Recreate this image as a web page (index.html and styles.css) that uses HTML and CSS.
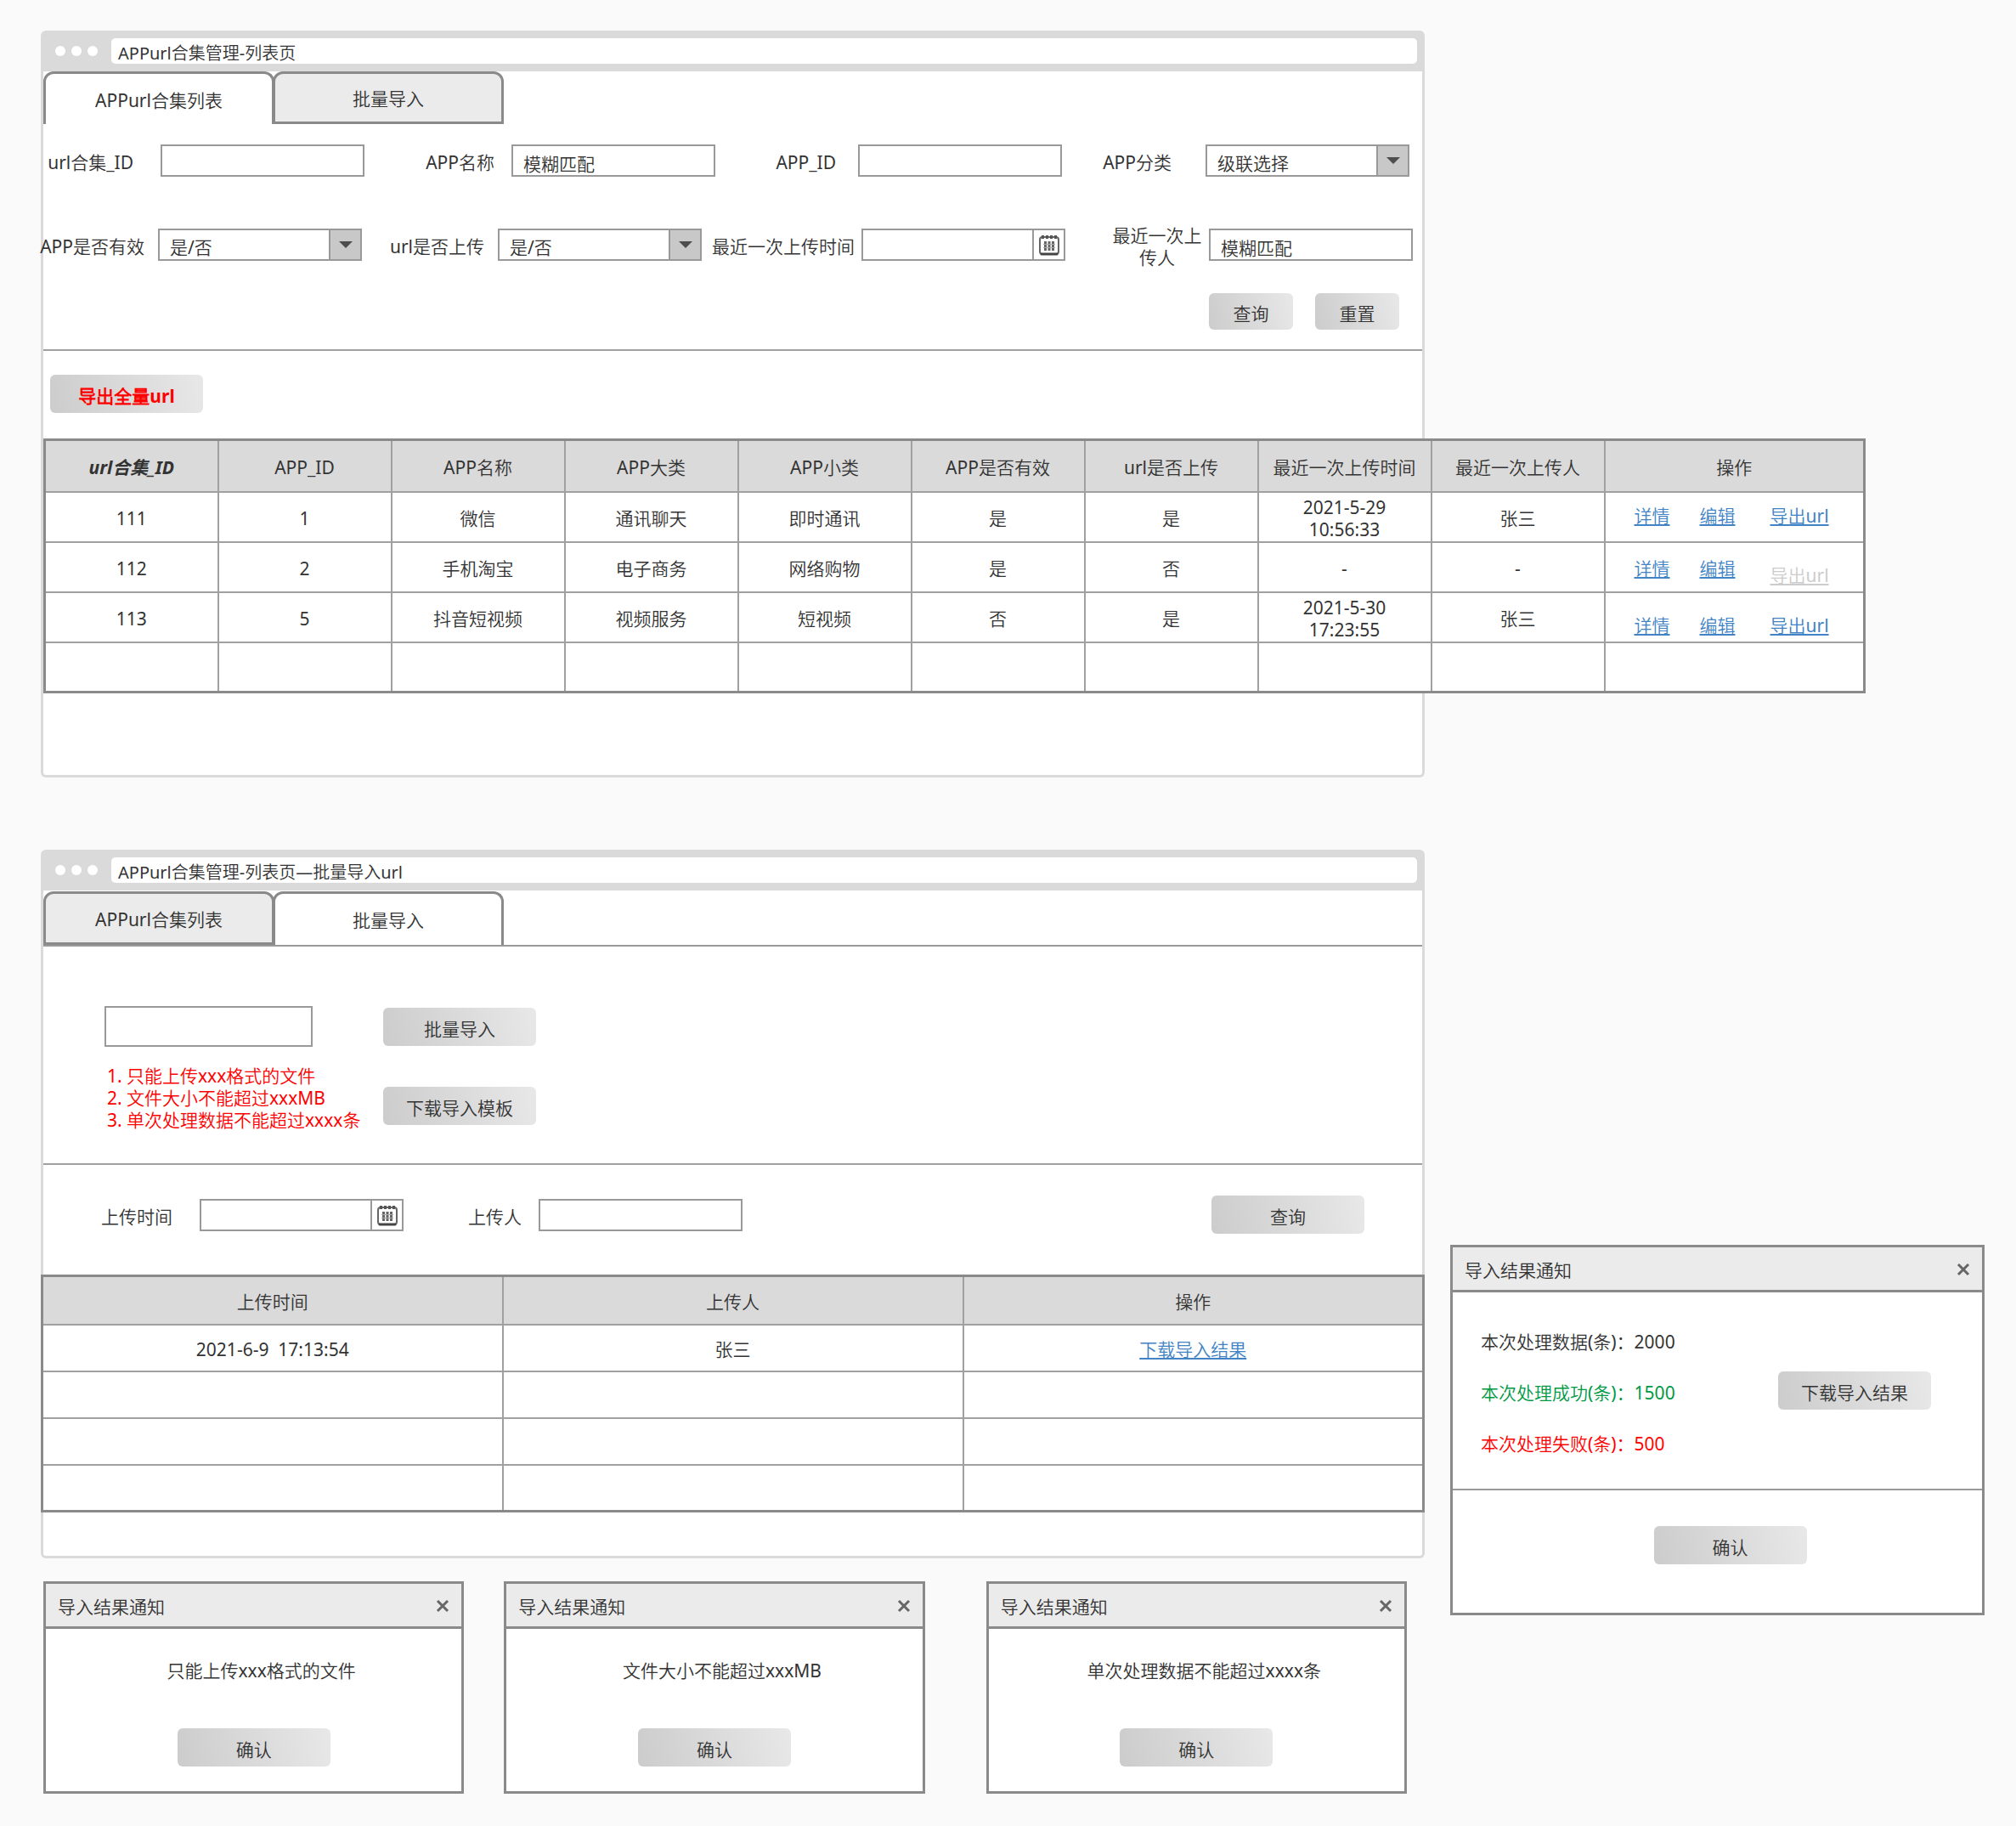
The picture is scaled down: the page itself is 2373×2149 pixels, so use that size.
FILE: index.html
```html
<!DOCTYPE html>
<html lang="zh-CN">
<head>
<meta charset="utf-8">
<meta name="viewport" content="width=device-width, initial-scale=1">
<title>APPurl合集管理</title>
<link rel="stylesheet" href="styles.css">
</head>
<body>
<svg class="sprite" aria-hidden="true">
  <symbol id="icon-calendar" viewBox="0 0 24 26">
    <rect x="1" y="4" width="22" height="20" rx="3" fill="#fff" stroke="#666" stroke-width="2"/>
    <path d="M3 24h18" stroke="#444" stroke-width="3" stroke-linecap="round"/>
    <path d="M3 4h18" stroke="#555" stroke-width="4" stroke-dasharray="3 2"/>
    <path d="M7.500 9v11M12 9v11M16.500 9v11" stroke="#666" stroke-width="3"/>
    <path d="M5 12.500h14M5 16.500h14" stroke="#aaa" stroke-width="1"/>
  </symbol>
  <symbol id="icon-arrow" viewBox="0 0 16 8"><path d="M0 0h16L8 8z" fill="#4d4d4d"/></symbol>
  <symbol id="icon-close" viewBox="0 0 16 16"><path d="M2 2l12 12M14 2L2 14" stroke="#666" stroke-width="3"/></symbol>
</svg>

<main class="board">
  <section class="window">
    <header class="window-bar">
      <span class="dot"></span><span class="dot"></span><span class="dot"></span>
      <h1 class="address">APPurl合集管理-列表页</h1>
    </header>
    <div class="window-body window-body-list">
      <nav class="tabs">
        <button class="tab tab-active" type="button">APPurl合集列表</button>
        <button class="tab" type="button">批量导入</button>
      </nav>
      <form class="filters">
        <div class="filter-row filter-row-first">
          <div class="field space-2xl"><label for="set-id">url合集_ID</label><input class="control" id="set-id" type="text"></div>
          <div class="field space-lg"><label for="app-name">APP名称</label><input class="control" id="app-name" type="text" value="模糊匹配"></div>
          <div class="field space-xl"><label for="app-id">APP_ID</label><input class="control" id="app-id" type="text"></div>
          <div class="field space-3xl"><label for="app-type">APP分类</label><span class="control combo"><select id="app-type"><option>级联选择</option></select><span class="combo-arrow"><svg width="16" height="8"><use href="#icon-arrow"/></svg></span></span></div>
        </div>
        <div class="filter-row filter-row-second">
          <div class="field space-md"><label for="app-valid">APP是否有效</label><span class="control combo"><select id="app-valid"><option>是/否</option></select><span class="combo-arrow"><svg width="16" height="8"><use href="#icon-arrow"/></svg></span></span></div>
          <div class="field space-md"><label for="url-uploaded">url是否上传</label><span class="control combo"><select id="url-uploaded"><option>是/否</option></select><span class="combo-arrow"><svg width="16" height="8"><use href="#icon-arrow"/></svg></span></span></div>
          <div class="field"><label for="last-time">最近一次上传时间</label><span class="control combo"><input id="last-time" type="text"><button class="combo-date" type="button" aria-label="选择日期"><svg width="24" height="26"><use href="#icon-calendar"/></svg></button></span></div>
          <div class="field"><label class="label-wrap" for="last-user">最近一次上传人</label><input class="control" id="last-user" type="text" value="模糊匹配"></div>
        </div>
        <div class="filter-actions">
          <button class="btn btn-small" type="button">查询</button>
          <button class="btn btn-small" type="reset">重置</button>
        </div>
      </form>
      <hr class="rule">
      <button class="btn btn-export" type="button">导出全量url</button>
      <table class="grid grid-list">
        <colgroup><col span="9" class="col-data"><col></colgroup>
        <thead>
          <tr><th class="key">url合集_ID</th><th>APP_ID</th><th>APP名称</th><th>APP大类</th><th>APP小类</th><th>APP是否有效</th><th>url是否上传</th><th>最近一次上传时间</th><th>最近一次上传人</th><th>操作</th></tr>
        </thead>
        <tbody>
          <tr><td>111</td><td>1</td><td>微信</td><td>通讯聊天</td><td>即时通讯</td><td>是</td><td>是</td><td>2021-5-29<br>10:56:33</td><td>张三</td>
            <td><div class="actions actions-high"><a href="#">详情</a><a href="#">编辑</a><a href="#">导出url</a></div></td></tr>
          <tr><td>112</td><td>2</td><td>手机淘宝</td><td>电子商务</td><td>网络购物</td><td>是</td><td>否</td><td>-</td><td>-</td>
            <td><div class="actions"><a href="#">详情</a><a href="#">编辑</a><a class="disabled" href="#" aria-disabled="true">导出url</a></div></td></tr>
          <tr><td>113</td><td>5</td><td>抖音短视频</td><td>视频服务</td><td>短视频</td><td>否</td><td>是</td><td>2021-5-30<br>17:23:55</td><td>张三</td>
            <td><div class="actions actions-low"><a href="#">详情</a><a href="#">编辑</a><a href="#">导出url</a></div></td></tr>
          <tr><td></td><td></td><td></td><td></td><td></td><td></td><td></td><td></td><td></td><td></td></tr>
        </tbody>
      </table>
    </div>
  </section>

  <div class="import-column">
    <section class="window">
      <header class="window-bar">
        <span class="dot"></span><span class="dot"></span><span class="dot"></span>
        <h2 class="address">APPurl合集管理-列表页—批量导入url</h2>
      </header>
      <div class="window-body window-body-import">
        <nav class="tabs tabs-ruled">
          <button class="tab" type="button">APPurl合集列表</button>
          <button class="tab tab-active" type="button">批量导入</button>
        </nav>
        <div class="upload">
          <div class="upload-file">
            <input class="file-box" type="text" aria-label="导入文件">
            <ol class="hints">
              <li>只能上传xxx格式的文件</li>
              <li>文件大小不能超过xxxMB</li>
              <li>单次处理数据不能超过xxxx条</li>
            </ol>
          </div>
          <div class="upload-actions">
            <button class="btn" type="button">批量导入</button>
            <button class="btn" type="button">下载导入模板</button>
          </div>
        </div>
        <hr class="rule">
        <form class="search">
          <div class="field space-2xl"><label for="up-time">上传时间</label><span class="control combo"><input id="up-time" type="text"><button class="combo-date" type="button" aria-label="选择日期"><svg width="24" height="26"><use href="#icon-calendar"/></svg></button></span></div>
          <div class="field space-lg"><label for="up-user">上传人</label><input class="control" id="up-user" type="text"></div>
          <button class="btn" type="button">查询</button>
        </form>
        <table class="grid grid-import">
          <thead><tr><th>上传时间</th><th>上传人</th><th>操作</th></tr></thead>
          <tbody>
            <tr><td class="stamp">2021-6-9  17:13:54</td><td>张三</td><td><a href="#">下载导入结果</a></td></tr>
            <tr><td></td><td></td><td></td></tr>
            <tr><td></td><td></td><td></td></tr>
            <tr><td></td><td></td><td></td></tr>
          </tbody>
        </table>
      </div>
    </section>

    <div class="notices">
      <section class="dialog">
        <header class="dialog-bar"><h3>导入结果通知</h3><button class="close" type="button" aria-label="关闭"><svg width="16" height="16"><use href="#icon-close"/></svg></button></header>
        <div class="notice"><p>只能上传xxx格式的文件</p><button class="btn" type="button">确认</button></div>
      </section>
      <section class="dialog">
        <header class="dialog-bar"><h3>导入结果通知</h3><button class="close" type="button" aria-label="关闭"><svg width="16" height="16"><use href="#icon-close"/></svg></button></header>
        <div class="notice"><p>文件大小不能超过xxxMB</p><button class="btn" type="button">确认</button></div>
      </section>
      <section class="dialog">
        <header class="dialog-bar"><h3>导入结果通知</h3><button class="close" type="button" aria-label="关闭"><svg width="16" height="16"><use href="#icon-close"/></svg></button></header>
        <div class="notice"><p>单次处理数据不能超过xxxx条</p><button class="btn" type="button">确认</button></div>
      </section>
    </div>
  </div>

  <section class="dialog dialog-result">
    <header class="dialog-bar"><h3>导入结果通知</h3><button class="close" type="button" aria-label="关闭"><svg width="16" height="16"><use href="#icon-close"/></svg></button></header>
    <div class="result">
      <div class="result-lines">
        <p>本次处理数据(条)：2000</p>
        <p class="ok">本次处理成功(条)：1500</p>
        <p class="fail">本次处理失败(条)：500</p>
      </div>
      <button class="btn" type="button">下载导入结果</button>
    </div>
    <footer class="result-footer"><button class="btn" type="button">确认</button></footer>
  </section>
</main>
</body>
</html>
```

FILE: styles.css
```css
* { box-sizing: border-box; }

body {
  margin: 0;
  background: #fafafa;
  color: #333;
  font: 400 21px/26px "Noto Sans", "Noto Sans CJK SC DemiLight", "Noto Sans CJK SC Light", "Noto Sans CJK SC", sans-serif;
}

h1, h2, h3, p, ol { margin: 0; padding: 0; font-weight: inherit; }
button, input, select { margin: 0; color: inherit; font: inherit; }
button { cursor: pointer; }
a { color: #4183c4; text-decoration: underline; }
.sprite { display: none; }

.board {
  display: grid;
  grid-template-columns: minmax(0, 1629fr) minmax(0, 629fr);
  gap: 85px 30px;
  padding: 36px 37px 36px 48px;
}

/* Browser-style window */
.window, .import-column { grid-column: 1; }
.window-bar {
  display: flex;
  align-items: center;
  gap: 7px;
  height: 48px;
  padding: 0 9px 0 17px;
  background: #dadada;
  border-radius: 6px 6px 0 0;
}
.dot { width: 12px; height: 12px; border-radius: 50%; background: #fff; }
.address {
  flex: 1;
  height: 30px;
  margin-left: 9px;
  padding: 5px 8px 0;
  border-radius: 5px;
  background: #fff;
  font-size: 20px;
}
.window-body {
  background: #fff;
  border: 3px solid #dadada;
  border-top: 0;
  border-radius: 0 0 6px 6px;
}
.window-body-list { padding-bottom: 96px; }
.window-body-import { padding-bottom: 51px; }

.tabs { display: flex; height: 62px; }
.tabs-ruled { height: 66px; padding-top: 1px; border-bottom: 2px solid #999; }
.tab {
  width: 272px;
  padding: 2px 0 0;
  border: 3px solid #8a8a8a;
  border-radius: 12px 12px 0 0;
  background: #ebebeb;
}
.tab + .tab { margin-left: -2px; }
.tab-active { border-bottom: 0; background: #fff; }

.rule { margin: 0; border: 0; border-top: 2px solid #a0a0a0; }

/* Buttons */
.btn {
  width: 180px;
  height: 45px;
  padding: 4px 0 0;
  border: 0;
  border-radius: 6px;
  background: linear-gradient(75deg, #ccc, #e8e8e8);
}
.btn-small { width: 99px; height: 43px; }
.btn-export { display: block; margin: 28px 0 30px 8px; color: #f00; font-weight: 700; }

/* Form controls */
.field { display: flex; align-items: center; justify-content: flex-end; gap: 8px; }
.space-md { gap: 16px; }
.space-lg { gap: 20px; }
.space-xl { gap: 26px; }
.space-2xl { gap: 32px; }
.space-3xl { gap: 40px; }
.field label { padding-top: 4px; white-space: nowrap; }
.field .label-wrap { width: 106px; white-space: normal; text-align: center; }
.control {
  flex: none;
  width: 240px;
  height: 38px;
  padding: 6px 12px 0;
  border: 2px solid #999;
  background: #fff;
}
.combo { display: flex; padding: 0; }
.combo select, .combo input {
  flex: 1;
  min-width: 0;
  padding: 6px 12px 0;
  border: 0;
  appearance: none;
  background: transparent;
}
.combo-arrow, .combo-date {
  display: flex;
  flex: none;
  align-items: center;
  justify-content: center;
  width: 37px;
  padding: 0;
  border: 0;
  border-left: 2px solid #999;
  background: #fff;
}
.combo-arrow { background: #c8c8c8; }

.filters { padding: 24px 0 23px; }
.filter-row { display: grid; align-items: center; }
.filter-row-first { grid-template-columns: minmax(0, 378fr) minmax(0, 413fr) minmax(0, 408fr) minmax(0, 409fr); padding-right: 15px; }
.filter-row-second { grid-template-columns: minmax(0, 375fr) minmax(0, 400fr) minmax(0, 428fr) minmax(0, 409fr); margin-top: 52px; padding-right: 11px; }
.filter-actions { display: flex; justify-content: flex-end; gap: 26px; margin-top: 29px; padding-right: 27px; }

/* Tables */
.grid {
  border: 3px solid #8a8a8a;
  border-collapse: collapse;
  table-layout: fixed;
  background: #fff;
  text-align: center;
}
.grid th, .grid td { padding: 4px 0 0; border: 2px solid #a0a0a0; font-weight: inherit; }
.grid th { background: #dadada; }
.grid .key { font-family: "Noto Sans", "Noto Sans CJK SC", sans-serif; font-weight: 700; font-style: italic; }
.grid-list { width: calc(100% + 522px); }
.grid-list .col-data { width: 204px; }
.grid-list th { height: 61px; }
.grid-list td { height: 59px; }
.actions {
  display: grid;
  grid-template-columns: 77px 83px auto;
  align-items: center;
  justify-content: start;
  height: 42px;
  padding-left: 34px;
  text-align: left;
}
.actions-high { padding-bottom: 6px; }
.actions-low { align-items: end; }
.actions .disabled { align-self: end; color: #ccc; }
.grid-import { width: calc(100% + 6px); margin: 0 -3px; }
.grid-import th { height: 57px; }
.grid-import td { height: 55px; }
.stamp { white-space: pre; }

/* Import page */
.upload { display: flex; padding: 70px 72px 38px; }
.upload-file { flex: none; width: 328px; }
.file-box { width: 245px; height: 48px; border: 2px solid #999; background: #fff; }
.hints { margin-top: 21px; padding-left: 26px; color: #f00; white-space: nowrap; }
.upload-actions { display: flex; flex-direction: column; gap: 48px; padding-top: 2px; }
.search { display: flex; align-items: center; gap: 76px; padding: 36px 68px 48px; }
.search .btn { margin-left: auto; }

/* Dialogs */
.dialog { border: 3px solid #8a8a8a; background: #fff; }
.dialog-bar {
  display: flex;
  align-items: center;
  justify-content: space-between;
  height: 53px;
  padding: 2px 14px 0;
  border-bottom: 3px solid #8a8a8a;
  background: #ebebeb;
}
.dialog-bar h3 { padding-top: 2px; font-size: 21px; }
.close { display: flex; padding: 0; border: 0; background: none; }
.notices { display: flex; gap: 47px; margin-top: 27px; padding: 0 21px 0 3px; }
.notices .dialog { flex: 1; height: 250px; }
.notices .dialog:last-child { margin-left: 25px; }
.notice { display: flex; flex-direction: column; align-items: center; gap: 55px; padding-top: 36px; }
.notice p { padding-left: 18px; }
.dialog-result { grid-column: 2; grid-row: 2; align-self: start; margin-top: 465px; }
.result { display: flex; align-items: center; justify-content: space-between; height: 233px; padding: 0 60px 0 33px; border-bottom: 2px solid #999; }
.result-lines { display: flex; flex-direction: column; gap: 34px; padding-top: 4px; }
.result-lines .ok { color: #009944; }
.result-lines .fail { color: #f00; }
.result-footer { display: flex; justify-content: center; padding: 42px 0 57px 30px; }
```
